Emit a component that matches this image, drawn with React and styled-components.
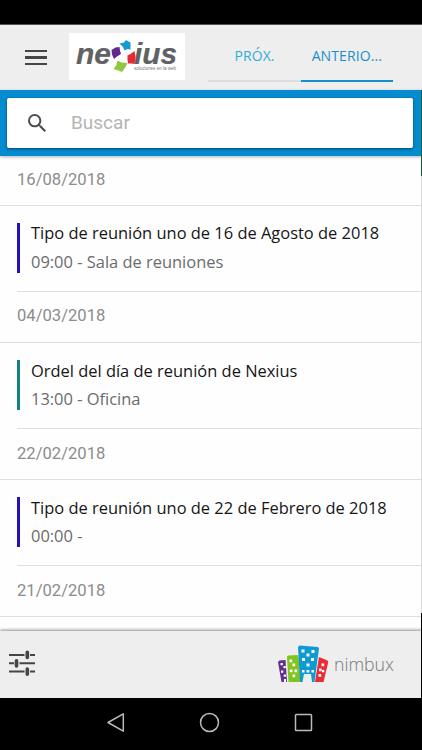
import React from "react";
import styled, { createGlobalStyle } from "styled-components";

const GlobalStyle = createGlobalStyle`
  * { box-sizing: border-box; }
  body { margin: 0; background: #000; font-family: "Open Sans", sans-serif; }
  svg { display: block; flex: none; }
`;

const Screen = styled.div`
  position: relative;
  display: flex;
  flex-direction: column;
  width: 422px;
  height: 750px;
  overflow: hidden;
  background: #000;
`;

const StatusBar = styled.div`
  flex: none;
  height: 25px;
  border-bottom: 1px solid #555;
`;

const Header = styled.header`
  flex: none;
  display: flex;
  align-items: flex-start;
  height: 65px;
  padding: 8px 0 0 25px;
  background: #eee;
`;

const MenuButton = styled.button`
  display: flex;
  flex-direction: column;
  justify-content: space-between;
  width: 22px;
  height: 15px;
  margin: 17px 22px 0 0;
  padding: 0;
  border: 0;
  background: none;
`;

const MenuLine = styled.span`
  height: 2.4px;
  background: #454545;
`;

const Logo = styled.div`
  width: 116px;
  height: 47px;
  background: #fff;
`;

const Tabs = styled.nav`
  display: flex;
  margin-left: 23.4px;
`;

const Tab = styled.a`
  width: 92.3px;
  height: 49px;
  padding-top: 13px;
  text-align: center;
  font-size: 14px;
  line-height: 20px;
  letter-spacing: 0.1px;
  color: ${(p) => (p.$active ? "#1a8fcd" : "#32acd8")};
  border-bottom: 2px solid ${(p) => (p.$active ? "#1590cf" : "#dcdcdc")};
`;

const SearchBand = styled.div`
  flex: none;
  position: relative;
  height: 66px;
  padding: 8px 9.5px 8px 6.5px;
  background: #058bd0;
  box-shadow: 0 1px 3px rgba(0, 0, 0, 0.3);
`;

const SearchBox = styled.div`
  display: flex;
  align-items: center;
  height: 49.5px;
  padding-left: 21.5px;
  border-radius: 2px;
  background: #fff;
  box-shadow: 0 1px 3px rgba(0, 0, 0, 0.5);
`;

const Placeholder = styled.span`
  margin-left: 25px;
  font: 19px Roboto, sans-serif;
  color: #b4b4b4;
`;

const List = styled.main`
  flex: 1;
  min-height: 0;
  overflow: hidden;
  background: #fefefe;
`;

const DateHeading = styled.h2`
  height: ${(p) => (p.$first ? 50 : 50.5)}px;
  margin: 0;
  padding: ${(p) => (p.$first ? 13 : 13.4)}px 0 0 17px;
  border-bottom: 1px solid #dedede;
  font: 400 16.6px/21px Roboto, sans-serif;
  color: #8c8c8c;
`;

const Meeting = styled.article`
  height: ${(p) => (p.$first ? 86 : 86.7)}px;
  margin-left: 17px;
  padding-top: 17px;
  border-bottom: 1px solid #dedede;
`;

const MeetingBody = styled.div`
  height: 50px;
  padding-left: 11px;
  border-left: 3px solid ${(p) => p.$accent};
`;

const Title = styled.div`
  height: 24px;
  font-size: 16.45px;
  line-height: ${(p) => (p.$first ? 20 : 21.5)}px;
  white-space: nowrap;
  color: #151515;
`;

const Detail = styled.div`
  font-size: 16.45px;
  line-height: 29px;
  white-space: nowrap;
  color: #6b6b6b;
`;

const Footer = styled.footer`
  position: relative;
  flex: none;
  display: flex;
  align-items: flex-start;
  height: 67px;
  padding: 12px 26px 0 9px;
  background: #eee;
  box-shadow: 0 -1px 3px rgba(0, 0, 0, 0.45);
`;

const Brand = styled.div`
  display: flex;
  margin-left: auto;
`;

const BrandName = styled.span`
  width: 62px;
  margin: 9px 0 0 5px;
  font-size: 17.7px;
  font-weight: 300;
  line-height: 24px;
  color: #777;
`;

const SystemNav = styled.nav`
  flex: none;
  display: flex;
  align-items: center;
  justify-content: space-between;
  height: 52px;
  padding: 0 109px 3px 106px;
`;

const EdgeStrip = styled.div`
  position: absolute;
  right: 0;
  top: 90px;
  width: 1px;
  height: 608px;
  background: linear-gradient(#125c2e 0 86px, #dcdcdc 86px 523px, #000 523px);
`;

const NexiusLogo = () => (
  <svg width="116" height="47" viewBox="0 0 116 47">
    <g fontFamily="Liberation Sans, sans-serif" fill="#606163">
      <g fontWeight="700" fontStyle="italic" fontSize="29" stroke="#606163" strokeWidth=".2">
        <text x="7" y="30.500" textLength="35" lengthAdjust="spacingAndGlyphs">ne</text>
        <text x="65" y="30.500" textLength="43" lengthAdjust="spacingAndGlyphs">ius</text>
      </g>
      <text x="65" y="36.500" fontSize="4.500" fill="#777" textLength="42" lengthAdjust="spacingAndGlyphs">soluciones en la web</text>
    </g>
    <path d="M50.500 10.500 55 9.500 57 7l2.500 1.500 2 1 0 7-3-.5-3 1.500-1.500-3.500Z" fill="#149bcd" />
    <path d="m42.500 17 4-2.500 4-.5 .5 3.500 1 3.500-4 2.500-3 2.500-2-4.500Z" fill="#61298e" />
    <path d="m58.500 22.500 3-1.500 4-3 1 6-1 7-3-.5-3.500 0-.5-4Z" fill="#e72836" />
    <path d="m48.500 27.500 4 2 6 .5-2 4-3.500 5-3.500-1.500-5-1.500 3-4Z" fill="#8fc73e" />
  </svg>
);

const TuneIcon = () => (
  <svg width="26" height="40" viewBox="0 0 26 40" stroke="#454545" fill="none">
    <path strokeWidth="2" d="M0 12h15.500M21 12h5M0 20.300h5M10.500 20.300H26M0 28.600h15.500M21 28.600h5" />
    <path strokeWidth="3.600" strokeLinecap="round" d="M18.300 9.300v5.200M7.500 17.700v5.200M18.300 26v5.200" />
  </svg>
);

const CityLogo = () => (
  <svg width="51" height="40" viewBox="0 0 51 40">
    <path fill="#622d8f" d="m0 19 1.500-1.500 6-.5 1.500 22H3.500Z" />
    <path fill="#82c41f" d="m9 13.500 1.500-1 9-.5 1 1.500 2 25.500H10.500Z" />
    <path fill="#0e9bd4" d="m20 4 1.500-1.500L40 4l1 1.500L36.500 39H34l-1-8h-7l-1.500 8h-2.500Z" />
    <path fill="#e92c35" d="m41 14 8.500 3.500.8 1.500L45.500 39H37Z" />
    <path fill="#fff" d="M2.500 20h2.300v2.300H2.500zM5.500 23h2.300v2.300H5.500zM3 27.500h2.300v2.300H3zM5.700 31.500h2.300v2.300H5.700zM6 36h2v3H6zM11.500 16.500h2.700v2.700h-2.700zM14.500 20.500h2.700v2.700h-2.700zM11.800 26.500h2.700v2.700h-2.700zM16.500 26.500h2.700v2.700h-2.700zM14.500 31.500h2.700v2.700h-2.700zM23.500 6.500h3v3h-3zM33.500 7h3v3h-3zM28.500 10.500h3v3h-3zM24 15h3v3h-3zM33 15h3v3h-3zM28.500 20.500h3v3h-3zM24 27h2.500v2.500H24zM28.500 27h2.800v2.500h-2.800zM33.500 27H36v2.500h-2.500zM43.500 20.500h2.700v2.700h-2.700zM41 25.500h2.700v2.700H41zM44 27h2.300v2.300H44zM40.500 31h2.700v2.700h-2.700z" />
  </svg>
);

const groups = [
  { date: "16/08/2018", title: "Tipo de reunión uno de 16 de Agosto de 2018", detail: "09:00 - Sala de reuniones", accent: "#2512b8" },
  { date: "04/03/2018", title: "Ordel del día de reunión de Nexius", detail: "13:00 - Oficina", accent: "#128186" },
  { date: "22/02/2018", title: "Tipo de reunión uno de 22 de Febrero de 2018", detail: "00:00 -", accent: "#2512b8" },
];

export default function App() {
  return (
    <Screen>
      <GlobalStyle />
      <StatusBar />
      <Header>
        <MenuButton aria-label="Menú">
          <MenuLine /><MenuLine /><MenuLine />
        </MenuButton>
        <Logo><NexiusLogo /></Logo>
        <Tabs>
          <Tab>PRÓX.</Tab>
          <Tab $active>ANTERIO...</Tab>
        </Tabs>
      </Header>
      <SearchBand>
        <SearchBox>
          <svg width="18" height="18" viewBox="3 3 17.5 17.5" fill="#4d4d4d">
            <path d="M15.500 14h-.79l-.28-.27A6.470 6.470 0 0 0 16 9.500 6.500 6.500 0 1 0 9.500 16c1.610 0 3.090-.59 4.230-1.570l.27.28v.79l5 4.990L20.490 19l-4.990-5zm-6 0C7.010 14 5 11.990 5 9.500S7.010 5 9.500 5 14 7.010 14 9.500 11.990 14 9.500 14z" />
          </svg>
          <Placeholder>Buscar</Placeholder>
        </SearchBox>
      </SearchBand>
      <List>
        {groups.map((g, i) => (
          <React.Fragment key={g.date}>
            <DateHeading $first={i === 0}>{g.date}</DateHeading>
            <Meeting $first={i === 0}>
              <MeetingBody $accent={g.accent}>
                <Title $first={i === 0}>{g.title}</Title>
                <Detail>{g.detail}</Detail>
              </MeetingBody>
            </Meeting>
          </React.Fragment>
        ))}
        <DateHeading>21/02/2018</DateHeading>
      </List>
      <Footer>
        <TuneIcon />
        <Brand>
          <CityLogo />
          <BrandName>nimbux</BrandName>
        </Brand>
      </Footer>
      <SystemNav>
        <svg width="19" height="21" viewBox="0 0 19 21" fill="none" stroke="#bbb" strokeWidth="1.500" strokeLinejoin="round">
          <path d="M17.300 1.800v17.400L2 10.500Z" />
        </svg>
        <svg width="21" height="21" viewBox="0 0 21 21" fill="none" stroke="#bbb" strokeWidth="1.500">
          <circle cx="10.500" cy="10.500" r="9" />
        </svg>
        <svg width="19" height="19" viewBox="0 0 19 19" fill="none" stroke="#bbb" strokeWidth="1.500">
          <rect x="1.500" y="1.500" width="16" height="16" rx=".8" />
        </svg>
      </SystemNav>
      <EdgeStrip />
    </Screen>
  );
}
